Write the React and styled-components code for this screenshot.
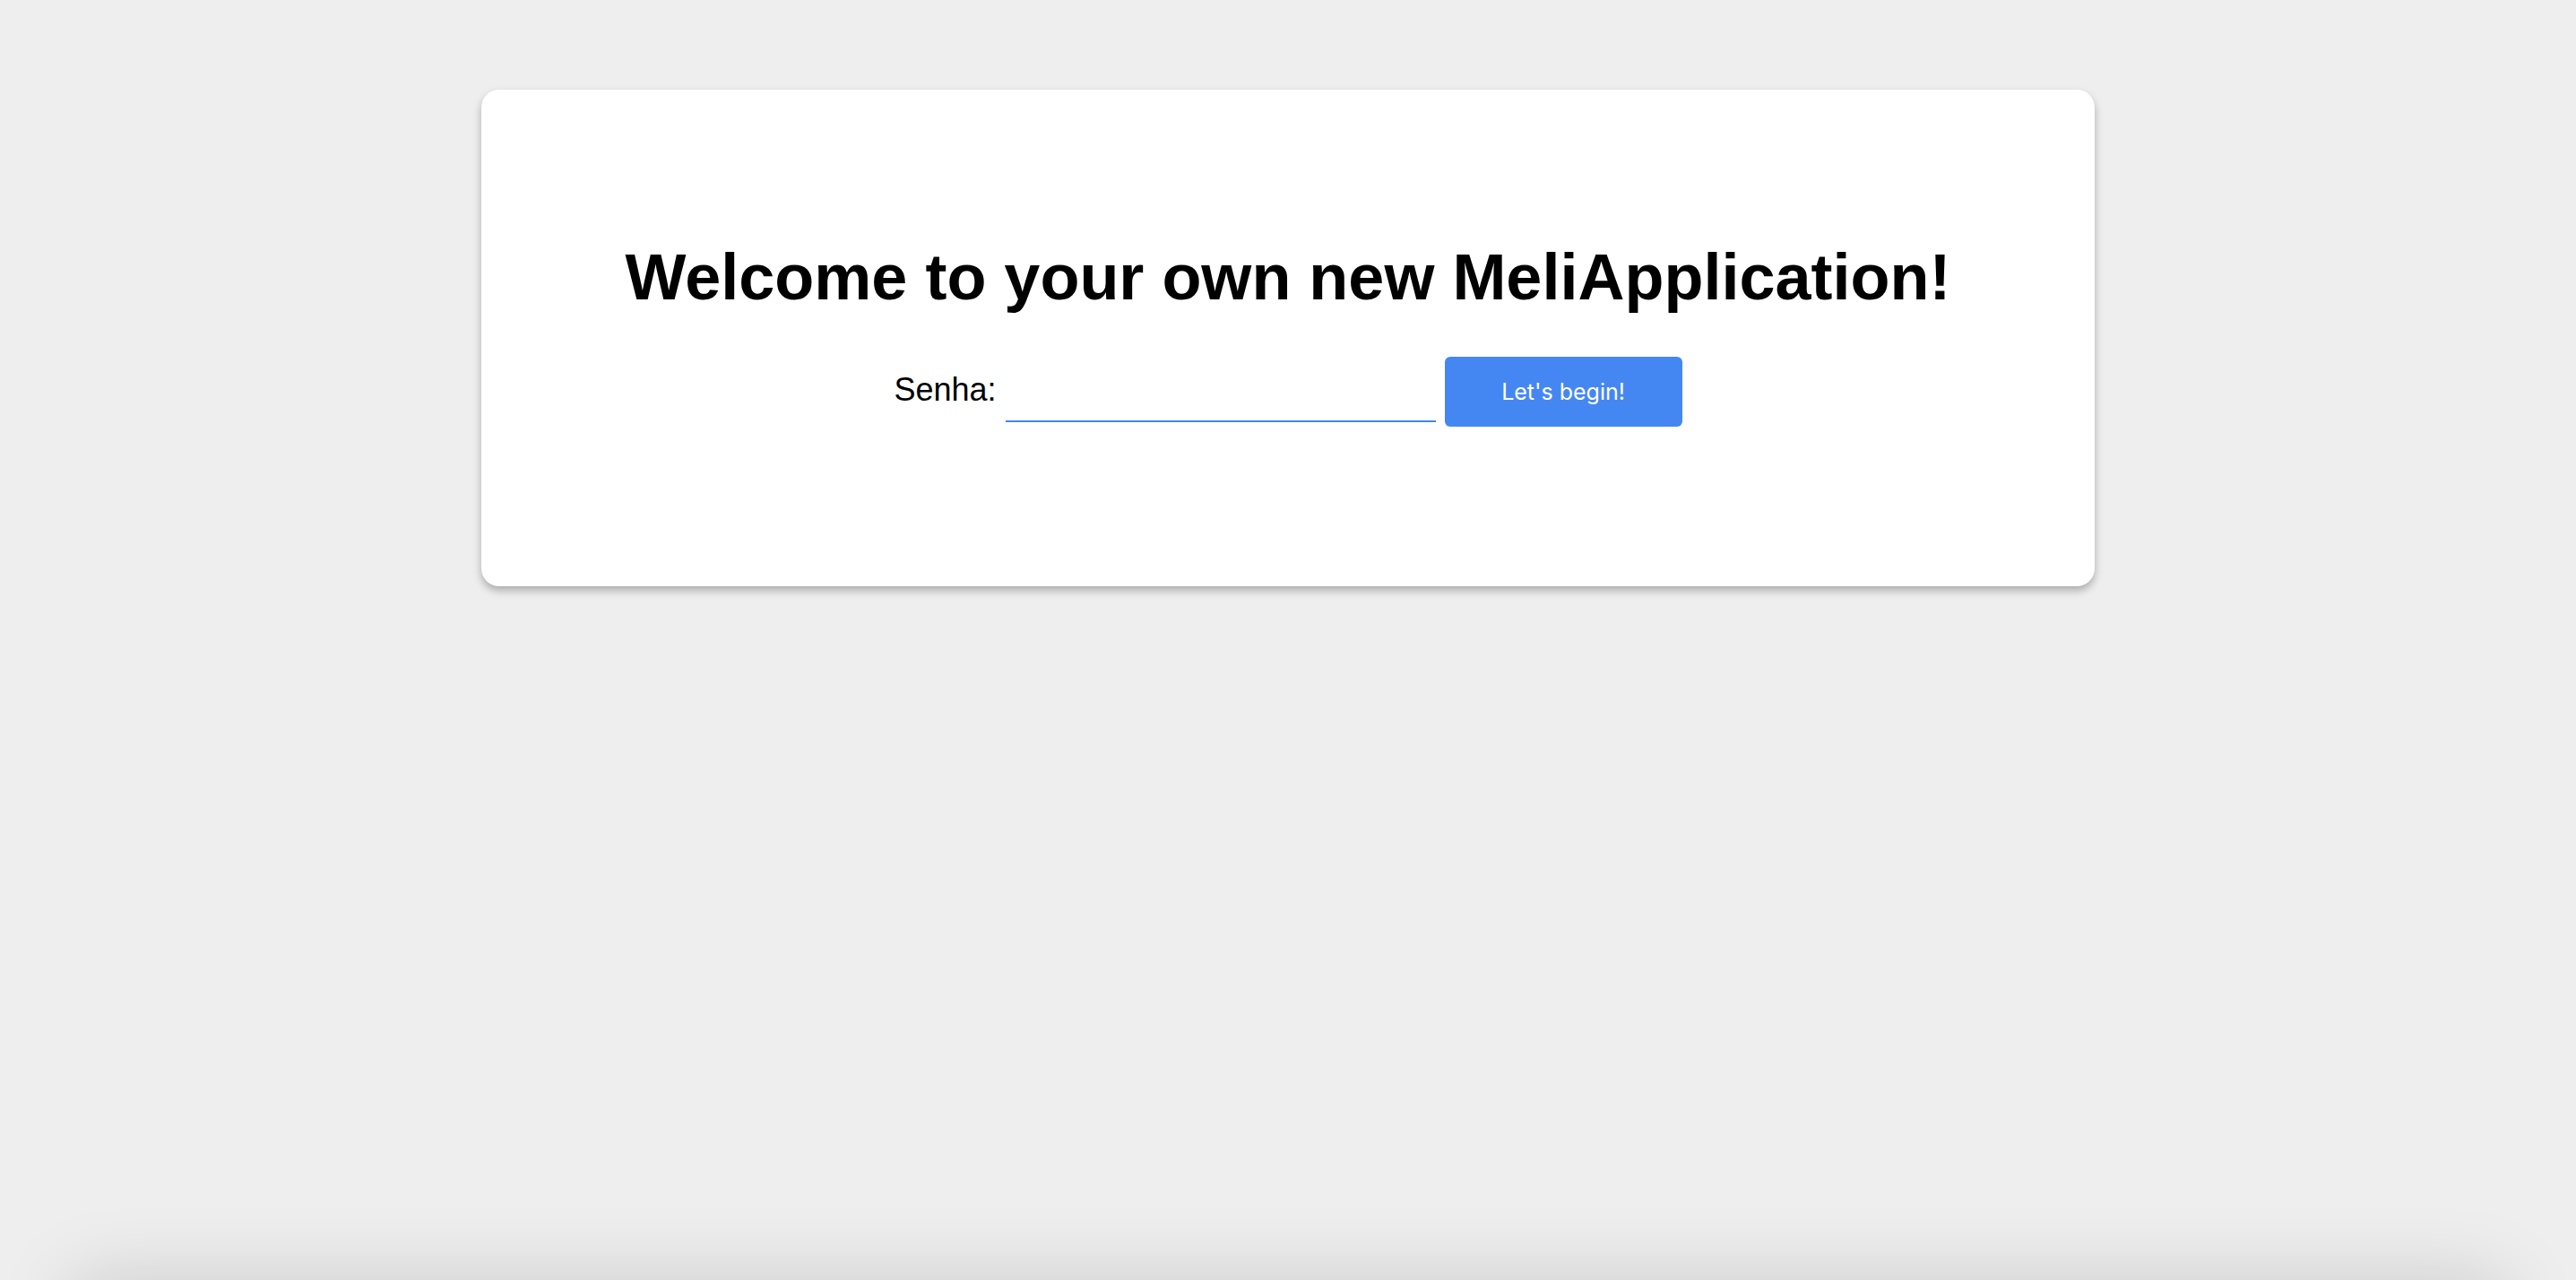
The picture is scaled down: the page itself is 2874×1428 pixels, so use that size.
import React, { useState } from "react";
import styled, { createGlobalStyle } from "styled-components";

const GlobalStyle = createGlobalStyle`
  html, body {
    margin: 0;
    padding: 0;
    background-color: #eeeeee;
    font-family: "Liberation Sans", Arial, Helvetica, sans-serif;
  }
  * {
    box-sizing: border-box;
  }
`;

const App = () => {
  const [password, setPassword] = useState("");

  const handleSubmit = (e) => {
    e.preventDefault();
  };

  return (
    <>
      <GlobalStyle />
      <Main>
        <Card>
          <Title>Welcome to your own new MeliApplication!</Title>
          <Form onSubmit={handleSubmit}>
            <Label htmlFor="senha">Senha:</Label>
            <Input
              id="senha"
              type="password"
              autoFocus
              value={password}
              onChange={(e) => setPassword(e.target.value)}
            />
            <Button type="submit">Let's begin!</Button>
          </Form>
        </Card>
      </Main>
      <Panel />
    </>
  );
};

const Main = styled.main`
  min-height: 100vh;
  padding-top: 100px;
`;

const Card = styled.div`
  width: 1800px;
  height: 554px;
  margin: 0 auto;
  padding-top: 168px;
  background-color: #fff;
  border-radius: 20px;
  box-shadow: 0 5px 10px rgba(0, 0, 0, 0.28);
  display: flex;
  flex-direction: column;
  align-items: center;
`;

const Title = styled.h1`
  margin: 0;
  font-size: 72px;
  line-height: 1.15;
  font-weight: bold;
  color: #000;
`;

const Form = styled.form`
  margin-top: 47px;
  display: flex;
  align-items: center;
  gap: 10px;
`;

const Label = styled.label`
  font-size: 36px;
  color: #000;
  position: relative;
  top: -2px;
`;

const Input = styled.input`
  width: 480px;
  height: 68px;
  padding: 0 3px;
  border: none;
  border-bottom: 2px solid #4285f4;
  outline: none;
  font-size: 26px;
  font-family: "Liberation Sans", Arial, sans-serif;
  background: transparent;
  caret-color: #000;
`;

const Button = styled.button`
  width: 265px;
  height: 78px;
  border: none;
  border-radius: 6px;
  background-color: #4587f2;
  color: #fff;
  font-family: Inter, "Liberation Sans", sans-serif;
  font-size: 25px;
  cursor: pointer;
`;

const Panel = styled.section`
  height: 400px;
  margin: 0 80px;
  background-color: #eeeeee;
  box-shadow: 0 0 80px rgba(0, 0, 0, 0.15);
`;

export default App;
